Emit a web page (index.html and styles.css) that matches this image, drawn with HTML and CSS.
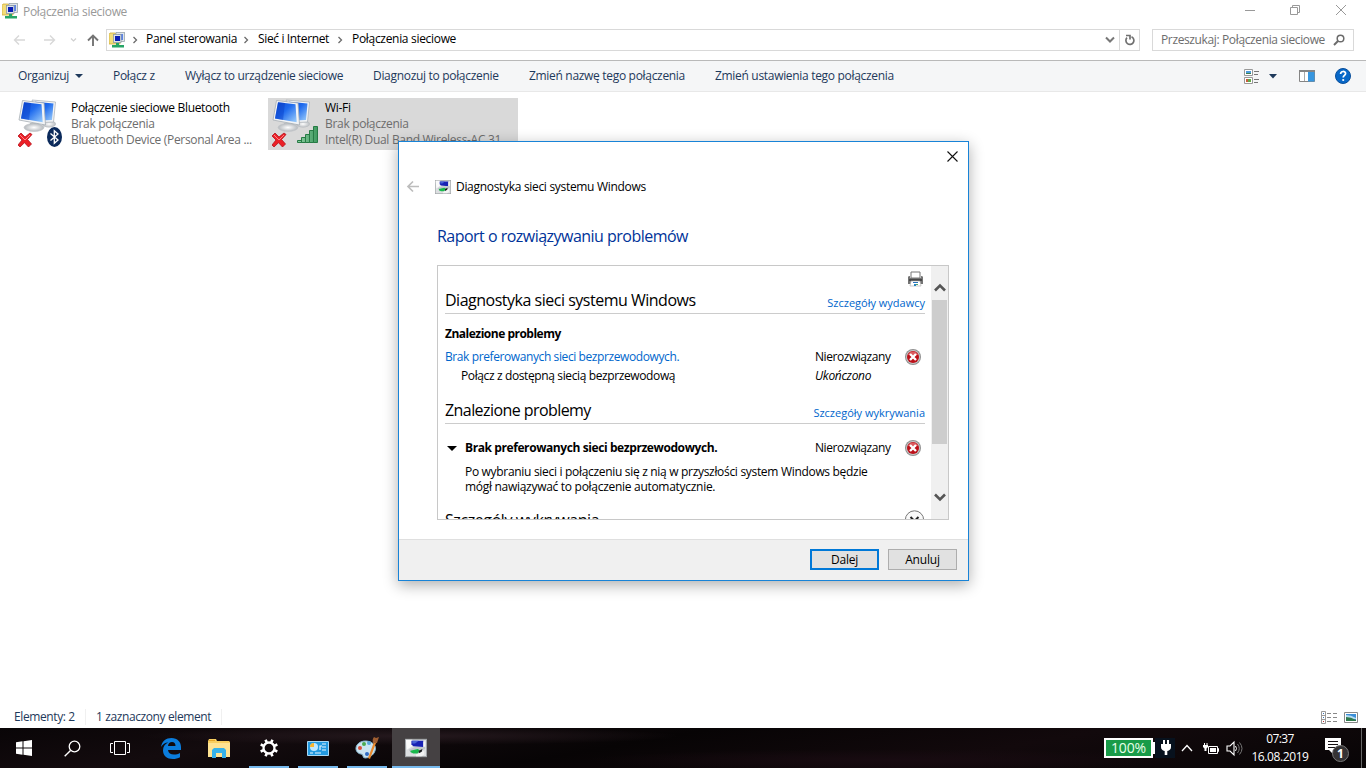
FILE: index.html
```html
<!DOCTYPE html>
<html lang="pl">
<head>
<meta charset="utf-8">
<title>Połączenia sieciowe</title>
<link rel="stylesheet" href="styles.css">
</head>
<body>
<svg class="defs" aria-hidden="true">
  <defs>
    <linearGradient id="screen" x1="0" y1="0" x2="1" y2="1"><stop offset="0" stop-color="#0a45cf"/><stop offset=".45" stop-color="#1f6bee"/><stop offset="1" stop-color="#9fd0fb"/></linearGradient>
    <linearGradient id="bars" x1="0" y1="0" x2="1" y2="0"><stop offset="0" stop-color="#8fd0a4"/><stop offset="1" stop-color="#3f9a60"/></linearGradient>
    <radialGradient id="stand"><stop offset="0" stop-color="#fff"/><stop offset="1" stop-color="#b5b9bd"/></radialGradient>
    <symbol id="folder-net" viewBox="0 0 16 16">
      <path d="M0 2.500l1-1.500h5l1 1h4v10H0z" fill="#f3dd78" stroke="#cfae3c" stroke-width=".8"/>
      <rect x="7" y=".5" width="8.500" height="9" fill="#dfe5ea" stroke="#9aa5ad" stroke-width=".8"/><rect x="9" y="2" width="5" height="6" fill="#5b83e6"/>
      <rect x="4.500" y="2.500" width="7.500" height="8" fill="#dfe5ea" stroke="#8d99a2" stroke-width=".8"/><rect x="6" y="4" width="5" height="5" fill="#0b1fb6"/>
      <path d="M7 11h3v2h5v2.500H3V13h4z" fill="#27a566"/>
    </symbol>
    <symbol id="computers" viewBox="0 0 46 50">
      <ellipse cx="31" cy="26" rx="7" ry="3.500" fill="url(#stand)"/>
      <path d="M14 2 37.500 4l-2 20-13 .5z" fill="#f2f4f6" stroke="#aeb5bb" stroke-width=".8"/><path d="M17 3.800 35.500 5.500 34 22l-10 .5z" fill="url(#screen)"/>
      <path d="M12 25h9l2 5H11z" fill="#aeb3b7"/><ellipse cx="16" cy="29.500" rx="10" ry="4" fill="url(#stand)" stroke="#c2c6c9" stroke-width=".6"/>
      <path d="M4.500 2.500 26 5l1.500 22L1 22z" fill="#f2f4f6" stroke="#a6adb4" stroke-width=".8"/><path d="M6 4.200 23.500 6.300l1.200 18L3 20.500z" fill="url(#screen)"/>
      <path d="M6 4.200 13 5 11 22 3 20.500z" fill="#0a3fc6" opacity=".45"/>
      <path d="m0 38 3-3 4 4 5-4 2 1.500-4.500 5 4 4.500-3 3-4-4.300L2 49l-2-2 4-5z" fill="#ec2027" stroke="#b5121c" stroke-width=".8"/><path d="m2 37 5 5 5-5" fill="none" stroke="#ff8484" stroke-width="1"/>
    </symbol>
    <symbol id="diag" viewBox="0 0 24 20">
      <rect x=".5" y=".5" width="23" height="19" fill="#dcdfe1" stroke="#a0a4a7"/>
      <path d="M1 1h7v7l-6 4z" fill="#fafafa"/>
      <path d="M7 2h13v7l-11-1-2-2z" fill="#1822b4"/><path d="M8 2h7l-4 3H8z" fill="#4763d6"/><path d="M20 3h2v5l-2 1z" fill="#f4f5f6"/>
      <path d="m4 12 7-3h11v2L7 16z" fill="#c1c7cb"/><path d="m6 13 8-2 2 1.500-2 3.500-5 0-3-1.500z" fill="#19b94c"/><path d="m15 13 4-2-1 4-3 1z" fill="#1b1e20"/><path d="m12 17 9-4v4l-3 2h-6z" fill="#f2f3f3"/>
    </symbol>
    <symbol id="error" viewBox="0 0 16 16">
      <circle cx="8" cy="8" r="8" fill="#8f8f8f"/><circle cx="8" cy="8" r="7" fill="#c7c7c7"/><circle cx="8" cy="8" r="6" fill="#bd1019"/><path d="M3 6a5.300 5.300 0 0 1 10 0z" fill="#db5a5e"/>
      <path d="m5 5 6 6m0-6-6 6" stroke="#fff" stroke-width="2.400"/>
    </symbol>
    <symbol id="crumb" viewBox="0 0 6 8"><path d="m1.500 1 3 3-3 3" fill="none" stroke="#6b6b6b" stroke-width="1.300"/></symbol>
  </defs>
</svg>

<main class="desktop">
  <section class="explorer">
    <header class="titlebar">
      <svg class="i16"><use href="#folder-net"/></svg>
      <span class="title">Połączenia sieciowe</span>
      <div class="controls">
        <svg width="12" height="12"><path d="M2 6.500h10" stroke="#999"/></svg>
        <svg width="12" height="12"><path d="M1.500 3.500h7v7h-7zM3.500 3.500v-2h7v7h-2" fill="none" stroke="#999"/></svg>
        <svg width="12" height="12"><path d="m1 1 10 10m0-10L1 11" stroke="#999"/></svg>
      </div>
    </header>

    <nav class="address-row">
      <div class="nav-buttons">
        <svg width="13" height="12"><path d="M12 6H1.500M6 1.500 1.500 6 6 10.500" fill="none" stroke="#d8d8d8" stroke-width="1.400"/></svg>
        <svg width="13" height="12"><path d="M1 6h10.500M7 1.500 11.500 6 7 10.500" fill="none" stroke="#d8d8d8" stroke-width="1.400"/></svg>
        <svg width="7" height="6"><path d="m1 1.500 2.500 2.500L6 1.500" fill="none" stroke="#cfcfcf" stroke-width="1.200"/></svg>
        <svg width="12" height="12"><path d="M6 12V1.500M1 6.500l5-5 5 5" fill="none" stroke="#747474" stroke-width="1.900"/></svg>
      </div>
      <div class="address">
        <svg class="i16"><use href="#folder-net"/></svg>
        <svg class="crumb c1"><use href="#crumb"/></svg><span class="path p1">Panel sterowania</span>
        <svg class="crumb"><use href="#crumb"/></svg><span class="path p2">Sieć i Internet</span>
        <svg class="crumb"><use href="#crumb"/></svg><span class="path p3">Połączenia sieciowe</span>
        <svg class="drop" width="10" height="8"><path d="m1 1.500 4 4 4-4" fill="none" stroke="#777" stroke-width="2"/></svg>
        <span class="refresh"><svg width="12" height="12"><path d="M7.500 2.800A4 4 0 1 1 3 3.700M2 1.500h4v4" fill="none" stroke="#707070" stroke-width="1.700"/></svg></span>
      </div>
      <div class="search"><span>Przeszukaj: Połączenia sieciowe</span><svg width="12" height="12"><circle cx="7.500" cy="4.500" r="3.300" fill="none" stroke="#6b6b6b" stroke-width="1.500"/><path d="M5 7 1 11" stroke="#6b6b6b" stroke-width="1.900"/></svg></div>
    </nav>

    <div class="commands">
      <span class="cmd k1">Organizuj<svg width="8" height="4"><path d="M0 0h8L4 4z" fill="#1e395b"/></svg></span>
      <span class="cmd k2">Połącz z</span>
      <span class="cmd k3">Wyłącz to urządzenie sieciowe</span>
      <span class="cmd k4">Diagnozuj to połączenie</span>
      <span class="cmd k5">Zmień nazwę tego połączenia</span>
      <span class="cmd k6">Zmień ustawienia tego połączenia</span>
      <div class="view-tools">
        <svg width="15" height="15"><path d="M.5.500h8v6h-8zM.5 8.500h8v6h-8z" fill="#fff" stroke="#999"/><path d="M2 2h5v3H2z" fill="#4d9cdb"/><path d="M2 4h5v1H2z" fill="#397c52"/><path d="M2 10h3v3H2z" fill="#c85a3b"/><path d="M4 10h3v3H4z" fill="#61a946"/><path d="M10 2.500h5M10 5.500h4M10 10.500h5M10 13.500h4" stroke="#777"/></svg>
        <svg class="tri" width="8" height="5"><path d="M0 0h8L4 4.500z" fill="#1e395b"/></svg>
        <svg class="pane" width="16" height="12"><path d="M.5.500h15v11H.5z" fill="#fff" stroke="#858585"/><path d="M0 0h16v2H0z" fill="#858585"/><path d="M5.500 2v9" stroke="#aaa"/><path d="M9 2h6.500v9.500H9z" fill="#3796df"/></svg>
        <svg class="help" width="16" height="16"><circle cx="8" cy="8" r="7.500" fill="#0868c8" stroke="#0a4f9b"/><path d="M5.600 6c0-3.400 5-3.200 5-.4 0 1.800-2.400 1.900-2.400 4" fill="none" stroke="#fff" stroke-width="1.700"/><circle cx="8.200" cy="12" r="1.100" fill="#fff"/></svg>
      </div>
    </div>

    <div class="items">
      <article class="item">
        <div class="thumb"><svg width="46" height="50"><use href="#computers"/><ellipse cx="36.500" cy="39" rx="7.500" ry="10" fill="#0b2a5b"/><path d="m32.500 35.500 7.500 6.500-3.700 3.300V32.700L40 36l-7.500 6.500" fill="none" stroke="#fff" stroke-width="1.300"/></svg></div>
        <div class="labels"><b class="n1">Połączenie sieciowe Bluetooth</b><span>Brak połączenia</span><span class="n2">Bluetooth Device (Personal Area ...</span></div>
      </article>
      <article class="item selected">
        <div class="thumb"><svg width="50" height="50"><use href="#computers" width="46" height="50"/><g fill="url(#bars)" stroke="#267b45"><path d="M25.500 42.500h4v2h-4zM29.500 39.500h4v5h-4zM33.500 36.500h4v8h-4zM37.500 32.500h4v12h-4zM41.500 28.500h4v16h-4z"/></g></svg></div>
        <div class="labels"><b>Wi-Fi</b><span>Brak połączenia</span><span class="n3">Intel(R) Dual Band Wireless-AC 31...</span></div>
      </article>
    </div>

    <footer class="status">
      <span class="s1">Elementy: 2</span><span class="s2">1 zaznaczony element</span>
      <div class="modes">
        <svg width="16" height="13"><path d="M.5.500h4v12h-4zM.5 4.500h4M.5 8.500h4" fill="none" stroke="#999"/><path d="M6 2.500h4M12 2.500h4M6 6.500h4M12 6.500h4M6 10.500h4M12 10.500h4" stroke="#888"/><path d="M2 2h1v1H2zM2 6h1v1H2z" fill="#3b75b8"/><path d="M2 10h1v1H2z" fill="#b33"/></svg>
        <svg width="14" height="11"><path d="M.5.500h13v10H.5z" fill="#fff" stroke="#888"/><path d="M2 2h10v7H2z" fill="#3c8fd8"/><path d="M2 3q5 0 10 3v1H2z" fill="#b7dcf1"/><path d="M2 5q5 0 10 3v1H2z" fill="#30794c"/></svg>
      </div>
    </footer>
  </section>

  <section class="dialog" role="dialog">
    <div class="dialog-top"><svg width="11" height="11"><path d="m.5.500 10 10m0-10-10 10" stroke="#111" stroke-width="1.100"/></svg></div>
    <div class="dialog-title"><svg class="back" width="13" height="12"><path d="M12 5.500H1M6 .5 1 5.500l5 5" fill="none" stroke="#bdbdbd" stroke-width="1.700"/></svg><svg class="diag-icon" viewBox="0 0 24 20" preserveAspectRatio="none"><use href="#diag" width="24" height="20"/></svg><span>Diagnostyka sieci systemu Windows</span></div>
    <h1>Raport o rozwiązywaniu problemów</h1>
    <div class="report">
      <div class="report-body">
        <div class="print"><svg width="17" height="16"><path d="M4 1h9v6H4z" fill="#fff" stroke="#777"/><path d="M1 6q0-1 2-1v2h11V5q2 0 2 1v7H1z" fill="#747474"/><path d="M2 8h13v2H2z" fill="#484848"/><path d="M4 10h9l1 5H3z" fill="#fff" stroke="#aaa" stroke-width=".6"/><path d="M6 11h5v1H6z" fill="#2872ba"/><path d="M7 13h2v2H7z" fill="#2482c2"/><path d="M9 13h2v1H9z" fill="#53a567"/></svg></div>
        <div class="section"><h2>Diagnostyka sieci systemu Windows</h2><a>Szczegóły wydawcy</a></div>
        <strong class="found">Znalezione problemy</strong>
        <div class="row first"><a class="problem">Brak preferowanych sieci bezprzewodowych.</a><span class="state">Nierozwiązany</span><svg class="i16"><use href="#error"/></svg></div>
        <div class="row sub"><span class="solution">Połącz z dostępną siecią bezprzewodową</span><i class="state done">Ukończono</i></div>
        <div class="section second"><h2>Znalezione problemy</h2><a>Szczegóły wykrywania</a></div>
        <div class="row expanded"><svg class="arrow" width="10" height="5"><path d="M0 0h10L5 5z"/></svg><strong>Brak preferowanych sieci bezprzewodowych.</strong><span class="state">Nierozwiązany</span><svg class="i16"><use href="#error"/></svg></div>
        <p><span>Po wybraniu sieci i połączeniu się z nią w przyszłości system Windows będzie</span><br><span class="q2">mógł nawiązywać to połączenie automatycznie.</span></p>
        <div class="section third"><h2>Szczegóły wykrywania</h2><svg width="20" height="20"><circle cx="9.500" cy="9" r="9.200" fill="#fafafa" stroke="#777"/><path d="m5.500 6 4 4 4-4M5.500 10l4 4 4-4" fill="none" stroke="#222" stroke-width="2"/></svg></div>
      </div>
      <div class="scroll">
        <svg width="12" height="9"><path d="m1 7.500 5-5 5 5" fill="none" stroke="#555" stroke-width="2.600"/></svg>
        <div class="scroll-thumb"></div>
        <svg class="down" width="12" height="9"><path d="m1 1.500 5 5 5-5" fill="none" stroke="#555" stroke-width="2.600"/></svg>
      </div>
    </div>
    <footer class="actions"><button class="primary">Dalej</button><button>Anuluj</button></footer>
  </section>

  <footer class="taskbar">
    <div class="task"><svg width="16" height="16"><path d="m0 2.300 6.500-1v6.200H0zM7.500 1.200 16 0v7.500H7.500zM0 8.500h6.500v6.200L0 13.700zM7.500 8.500H16V16l-8.500-1.200z" fill="#fff"/></svg></div>
    <div class="task"><svg width="17" height="17"><circle cx="10.500" cy="6.500" r="5.300" fill="none" stroke="#fff" stroke-width="1.300"/><path d="M6.500 10.500.700 16.300" stroke="#fff" stroke-width="1.400"/></svg></div>
    <div class="task"><svg width="20" height="14"><path d="M4.500.500h11v13h-11zM3 2.500H.5v9H3M17 2.500h2.500v9H17" fill="none" stroke="#fff"/></svg></div>
    <div class="task edge"><svg width="20" height="21"><path d="M0 9C1 3 5 0 10.500 0 16.500 0 20 4 20 9v3H7c.3 3 2.700 4.500 6 4.500 2.300 0 4.200-.6 6-1.600v4.300c-2 1.200-4.500 1.800-7.200 1.800C6 21 2 17.500 2 12.500c0-3.700 2-6.700 5.300-8C4 4.500 1.600 6.500 0 9zm7-1h7.500c0-2.500-1.300-4-3.500-4S7.300 5.600 7 8z" fill="#0b7ddd" fill-rule="evenodd"/></svg></div>
    <div class="task"><svg width="22" height="19"><path d="M0 2 1 0h7l1 2h12l1 1v15H0z" fill="#f8cf60"/><path d="M0 4h22v14H0z" fill="#fee392"/><path d="M1 1h6v1H1z" fill="#e6a627"/><path d="M4 19v-8l2-2h10l2 2v8h-4v-5H8v5z" fill="#35b2e9"/></svg></div>
    <div class="task open settings"><svg width="20" height="20" viewBox="0 0 20 20"><circle cx="10" cy="10" r="5.500" fill="none" stroke="#fff" stroke-width="2.300"/><path d="M10 1v3m0 12v3M1 10h3m12 0h3M3.600 3.600l2.200 2.200m8.400 8.400 2.200 2.200m0-12.800-2.200 2.200m-8.400 8.400-2.200 2.200" stroke="#fff" stroke-width="2.600" transform="rotate(22.500 10 10)"/></svg></div>
    <div class="task open"><svg width="22" height="17"><path d="M.5 1.500h21v14H.5z" fill="#239ae0" stroke="#a8d9f5"/><circle cx="7" cy="7" r="4" fill="#bde7ff"/><path d="M7 3v4H3a4 4 0 0 1 4-4z" fill="#f9b52e"/><path d="M13 10V6h2M15 4h4M15 7h4M15 10h4M3 13h3M8 13h6" fill="none" stroke="#e8f8ff" stroke-width="1.200"/></svg></div>
    <div class="task open"><svg width="24" height="24"><path d="M2 9c4-6 15-5 18 1 2 5-3 12-10 12-3 0-1-4-4-4S-1 14 2 9z" fill="#cbe4f1" stroke="#86b6cf"/><circle cx="9" cy="8" r="2" fill="#4baa50"/><circle cx="14" cy="7" r="2" fill="#58a5dc"/><circle cx="5" cy="12" r="2" fill="#d94e38"/><circle cx="12" cy="18" r="2" fill="#306cc3"/><path d="m19 6 2 1-6 16-2-1z" fill="#e88a2f"/><path d="M18 7q-1-4 1-6l2 1 3-1-2 6z" fill="#9e5d31"/></svg></div>
    <div class="task open active"><svg width="22" height="20"><use href="#diag"/></svg></div>
    <div class="tray">
      <div class="battery">100%</div><i class="nub"></i>
      <div class="plug"><svg width="10" height="15"><path d="M2 0h2v4h2V0h2v4h2v3q0 3-3.700 4v4H3.700v-4Q0 10 0 7V4h2z" fill="#fff"/></svg></div>
      <svg class="chev" width="12" height="8"><path d="m1 7 5-5.500L11 7" fill="none" stroke="#fff" stroke-width="1.300"/></svg>
      <svg class="power" width="17" height="13"><path d="M5.500 4.500h9v7h-9zM14.500 6.500h1v3h-1" fill="none" stroke="#fff"/><path d="M7 6h6v4H7z" fill="#fff"/><path d="M0 3h5v2L3.500 6.500V9h-2V6.500L0 5zM1 1h1v2H1zM3.500 1h1v2h-1z" fill="#fff"/></svg>
      <svg class="volume" width="17" height="15"><path d="M1 5h3l4-4v13L4 10H1z" fill="none" stroke="#fff" stroke-width="1.100"/><path d="M9.500 5q2 2.500 0 5" fill="none" stroke="#fff"/><path d="M11.500 3q3.500 4.500 0 9M13.500 1.500q5 6 0 12" fill="none" stroke="#777"/></svg>
      <div class="clock"><span>07:37</span><span>16.08.2019</span></div>
      <div class="notice"><svg width="24" height="25"><path d="M0 0h16v12H8v4l-4-4H0z" fill="#fff"/><path d="M3 3.500h10M3 6.500h10M3 9.500h7" stroke="#161113"/><circle cx="15.500" cy="15.500" r="8" fill="#353334" stroke="#777"/></svg><b>1</b></div>
      <i class="show-desktop"></i>
    </div>
  </footer>
</main>
</body>
</html>
```
FILE: styles.css
```css
* { box-sizing: border-box; }
body { margin: 0; overflow: hidden; background: #fff; color: #000; font: 12px/16px "Open Sans", "Noto Sans", sans-serif; letter-spacing: -.31px; }
svg { display: block; flex: none; overflow: visible; }
span, a, b, strong { white-space: nowrap; }
.defs { position: absolute; width: 0; height: 0; }
.i16 { width: 16px; height: 16px; }
.desktop { position: relative; width: 1366px; height: 768px; overflow: hidden; display: flex; flex-direction: column; }
.explorer { height: 728px; display: flex; flex-direction: column; }

.titlebar { height: 24px; display: flex; padding: 3px 19px 0 2px; color: #999; }
.title { margin: 1px 0 0 5px; }
.controls { margin-left: auto; display: flex; gap: 34px; padding-top: 1px; }

.address-row { height: 36px; display: flex; align-items: flex-start; padding: 5px 12px 0 13px; }
.nav-buttons { width: 93px; height: 22px; display: flex; align-items: center; gap: 17px; }
.nav-buttons svg:nth-child(3) { margin-left: -3px; }
.nav-buttons svg:nth-child(4) { margin-left: -7px; }
.address { width: 1034px; height: 22px; border: 1px solid #d9d9d9; display: flex; align-items: center; padding-left: 2px; }
.crumb { width: 6px; height: 8px; margin-right: 9px; }
.crumb.c1 { margin-left: 7px; margin-right: 8px; }
.path { margin-top: -2px; }
.p1 { width: 97px; }
.p2 { width: 79px; letter-spacing: -.36px; }
.drop { margin-left: auto; }
.refresh { width: 20px; height: 20px; margin-left: 4px; padding: 4px 0 0 4px; border-left: 1px solid #d9d9d9; }
.search { width: 202px; height: 22px; margin-left: 12px; padding: 0 8px 0 8px; border: 1px solid #d9d9d9; display: flex; align-items: center; justify-content: space-between; color: #6d6d6d; letter-spacing: -.37px; }

.commands { height: 32px; display: flex; align-items: center; padding: 0 15px 0 18px; border-top: 1px solid #b9b9b9; border-bottom: 1px solid #e8e8e8; background: #f5f6f7; color: #1e395b; }
.cmd { display: flex; align-items: center; }
.k1 { width: 95px; gap: 6px; }
.k2 { width: 72px; }
.k3 { width: 188px; letter-spacing: -.34px; }
.k4 { width: 156px; }
.k5 { width: 186px; }
.view-tools { margin-left: auto; display: flex; align-items: center; }
.tri { margin-left: 10px; }
.pane { margin-left: 22px; }
.help { margin-left: 20px; }

.items { flex: 1; display: flex; padding: 6px 0 0 14px; gap: 4px; align-items: flex-start; }
.item { width: 250px; height: 52px; display: flex; }
.selected { background: #d9d9d9; }
.thumb { width: 57px; height: 52px; padding: 0 0 0 4px; }
.labels { display: flex; flex-direction: column; padding-top: 2px; color: #6d6d6d; }
.labels b { font-weight: 400; color: #000; }
.n1, .labels .n2 { letter-spacing: -.33px; }

.status { height: 22px; display: flex; align-items: center; padding: 0 8px 0 14px; color: #1e395b; letter-spacing: -.39px; }
.s1 { width: 72px; border-right: 1px solid #f0f0f0; }
.s2 { width: 136px; padding-left: 10px; border-right: 1px solid #f0f0f0; }
.modes { margin-left: auto; display: flex; align-items: center; gap: 7px; }

/* Dialog window floating above the explorer */
.dialog { position: absolute; left: 398px; top: 141px; width: 571px; height: 440px; border: 1px solid #1883d7; background: #fff; box-shadow: 0 4px 14px rgba(0,0,0,.32); display: flex; flex-direction: column; }
.dialog-top { height: 35px; padding: 9px 10px 0 0; display: flex; justify-content: flex-end; }
.dialog-title { height: 20px; display: flex; align-items: center; padding-left: 8px; }
.diag-icon { width: 16px; height: 14px; margin-left: 15px; }
.dialog-title span { margin-left: 5px; }
h1, h2 { margin: 0; font-weight: 400; white-space: nowrap; }
h1 { height: 68px; padding: 28px 0 0 38px; font-size: 16px; line-height: 22px; letter-spacing: -.52px; color: #003399; }
.report { width: 512px; height: 255px; margin-left: 38px; border: 1px solid #c8c8c8; display: flex; overflow: hidden; }
.report-body { width: 493px; height: 253px; padding: 0 6px 0 7px; overflow: hidden; }
.print { height: 22px; display: flex; justify-content: flex-end; padding: 5px 1px 0 0; }
.section { height: 26px; display: flex; align-items: center; justify-content: space-between; border-bottom: 1px solid #ccc; }
h2 { font-size: 16px; line-height: 22px; padding-bottom: 2px; letter-spacing: -.49px; }
.second h2 { letter-spacing: -.57px; }
a { color: #0066cc; }
.section a { font-size: 11px; padding-top: 4px; letter-spacing: 0; }
.found { display: block; height: 20px; margin-top: 10px; line-height: 20px; letter-spacing: -.5px; }
.row { height: 20px; display: flex; align-items: center; }
.first { margin-top: 3px; }
.problem { width: 370px; letter-spacing: -.4px; }
.state { width: 90px; letter-spacing: -.44px; }
.done { letter-spacing: -.3px; }
.sub { height: 18px; }
.solution { width: 354px; margin-left: 16px; letter-spacing: -.38px; }
.second { margin-top: 13px; }
.expanded { margin-top: 14px; }
.arrow { margin: 0 8px 0 2px; }
.row strong { width: 350px; letter-spacing: -.41px; }
p { height: 30px; margin: 6px 0 0 20px; line-height: 15px; }
.q2 { letter-spacing: -.29px; }
.third { margin-top: 14px; border: 0; }
.third h2 { letter-spacing: -.41px; }
.scroll { width: 17px; height: 253px; background: #f0f0f0; padding: 17px 0 0 0; display: flex; flex-direction: column; align-items: center; }
.scroll-thumb { width: 15px; height: 144px; margin-top: 8px; background: #cdcdcd; flex: none; }
.down { margin-top: 49px; }
.actions { height: 41px; margin-top: 19px; padding: 9px 11px 0; display: flex; justify-content: flex-end; gap: 9px; border-top: 1px solid #dfdfdf; background: #f0f0f0; }
button { width: 69px; height: 21px; padding: 0; border: 1px solid #adadad; background: #e1e1e1; font: inherit; line-height: 18px; letter-spacing: -.2px; color: #000; }
button.primary { border: 2px solid #0078d7; }

.taskbar { height: 40px; display: flex; background: radial-gradient(ellipse at 30% 20%, #24181d 0, transparent 20%), radial-gradient(ellipse at 65% 80%, #180b11 0, transparent 24%), linear-gradient(170deg, #090507, #130b0e 20%, #070405 45%, #12090c 70%, #080506); color: #fff; }
.task { width: 48px; height: 40px; display: flex; align-items: center; justify-content: center; }
.task.edge { margin-left: 3px; }
.task.open { border-bottom: 2px solid #76b9ed; width: 40px; margin-left: 9px; padding-top: 2px; }
.task.settings { margin-left: 6px; }
.task.active { width: 48px; background-color: #454143; margin-left: 5px; }
.tray { margin-left: auto; display: flex; align-items: center; }
.battery { width: 49px; height: 20px; border: 2px solid #fff; background: #189b48; color: #eaffea; font-size: 14px; line-height: 16px; text-align: center; letter-spacing: -.1px; }
.nub { width: 2px; height: 12px; background: #fff; }
.plug { width: 20px; height: 20px; background: #07111d; padding: 2px 0 0 6px; }
.chev { margin-left: 6px; }
.power { margin-left: 10px; }
.volume { margin-left: 6px; }
.clock { width: 66px; margin-left: 4px; display: flex; flex-direction: column; align-items: center; line-height: 18px; letter-spacing: -.58px; }
.clock span:last-child { letter-spacing: -.62px; letter-spacing: -.4px; }
.notice { position: relative; width: 24px; height: 25px; margin: 4px 0 0 12px; }
.notice b { position: absolute; left: 12px; top: 8px; font-size: 12px; line-height: 16px; }
.show-desktop { width: 5px; height: 40px; margin-left: 12px; border-left: 1px solid #666; }
```
